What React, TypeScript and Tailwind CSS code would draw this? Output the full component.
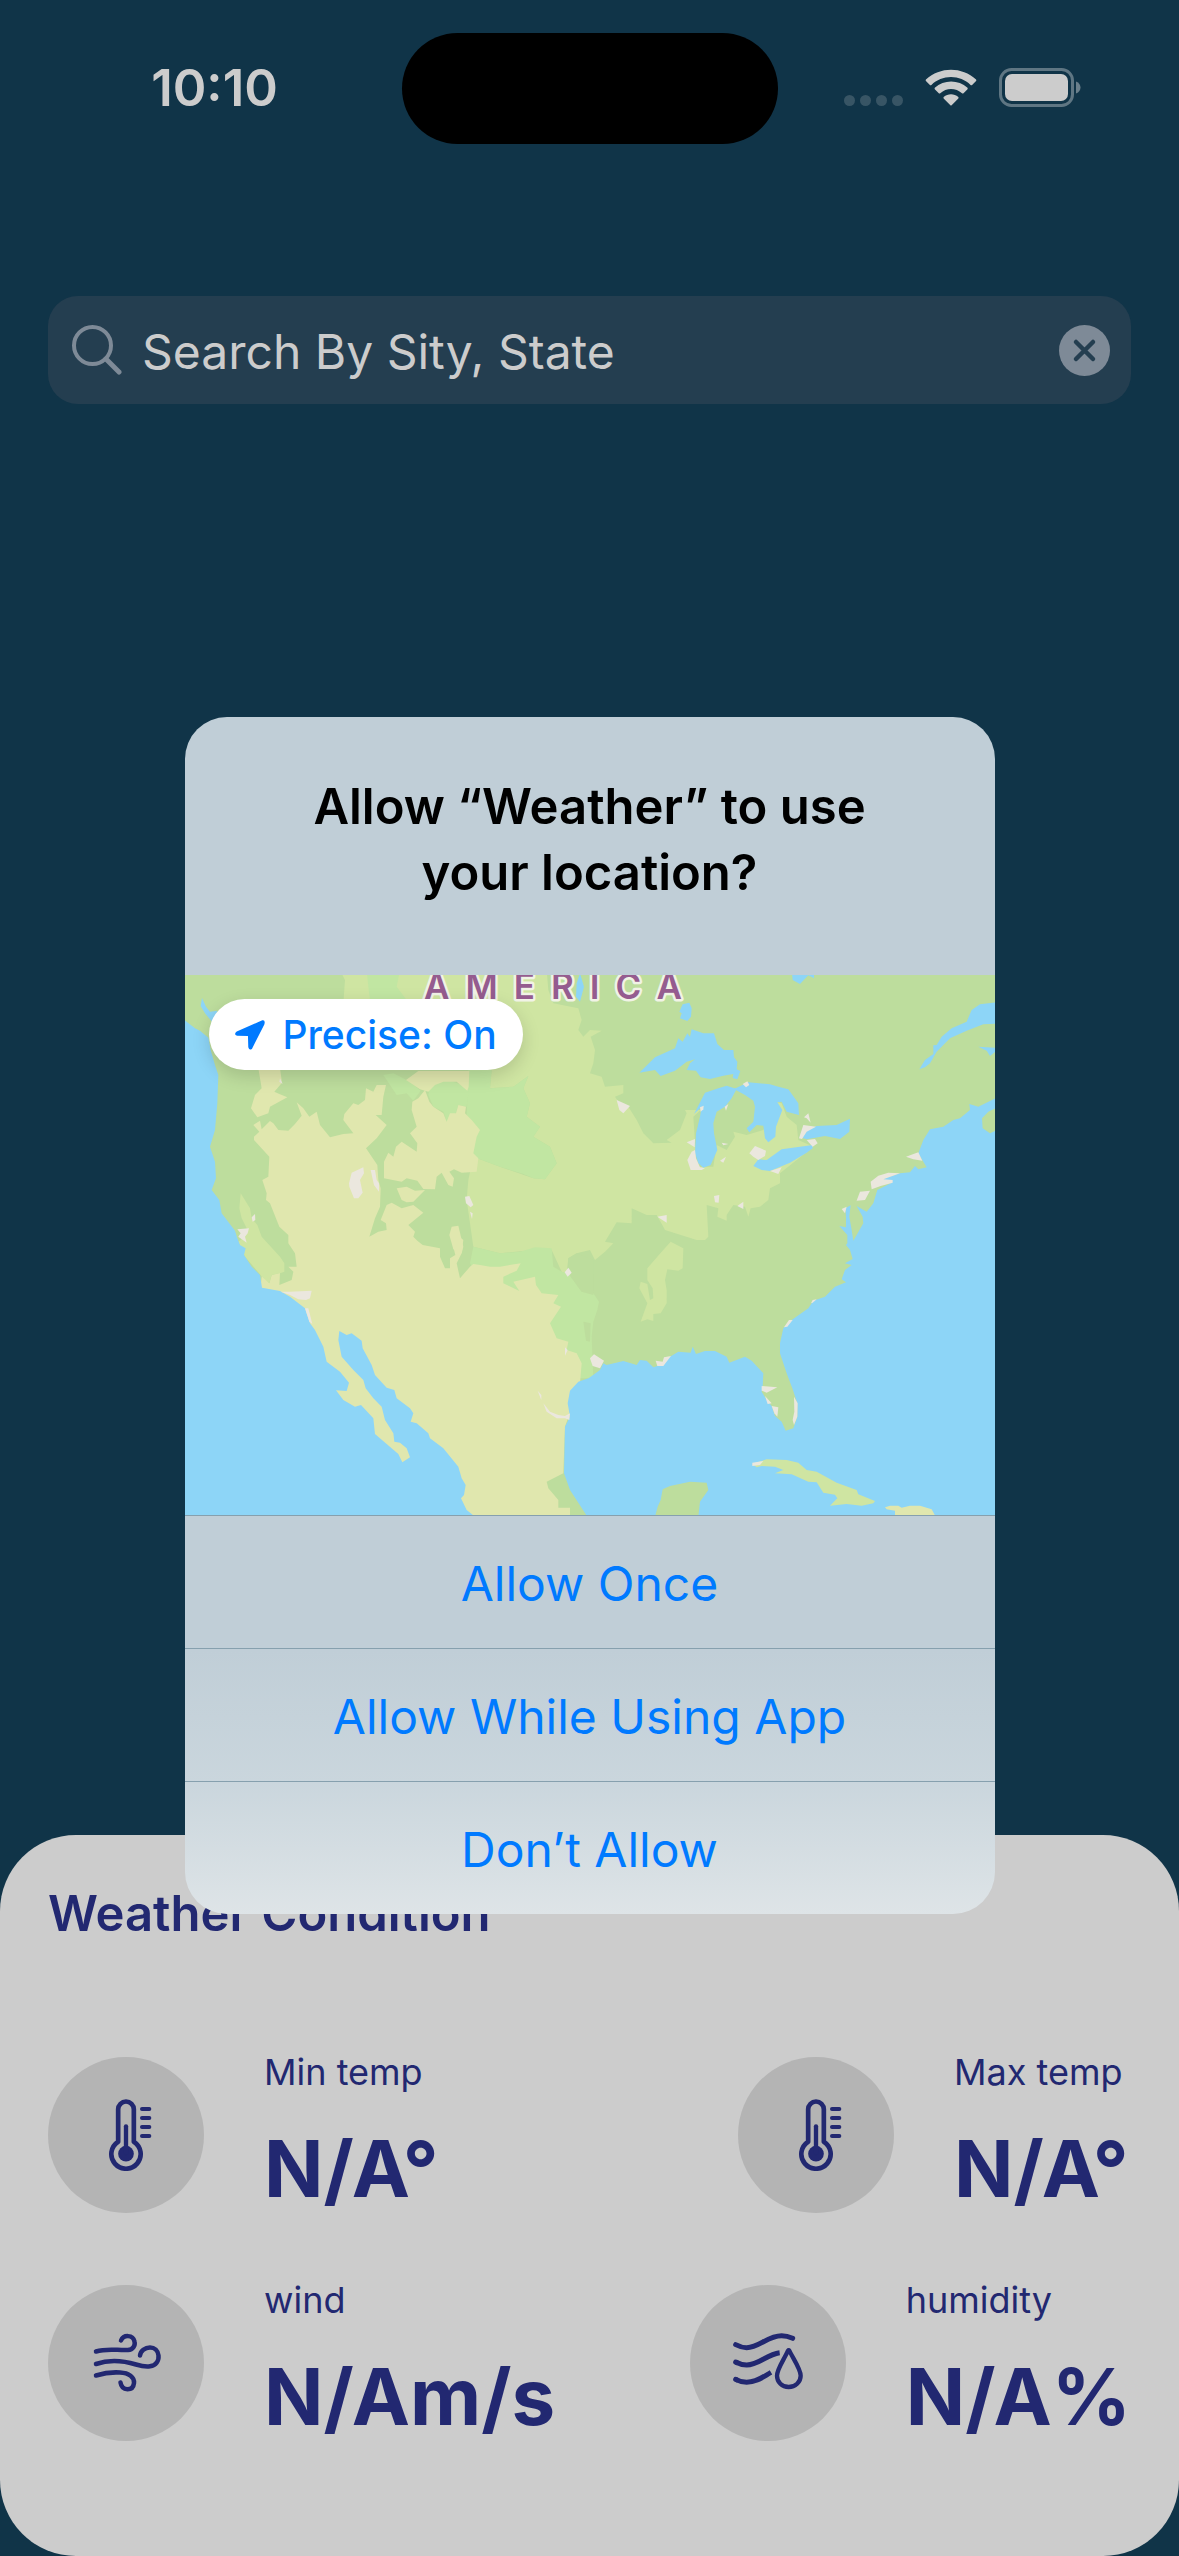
import React from "react";

/** Shifts a list of "x,y" points, so coast lines can be written tile by tile. */
function at(dx: number, dy: number, points: string): string {
  return points
    .trim()
    .split(/\s+/)
    .map((pair) => {
      const [x, y] = pair.split(",").map(Number);
      return `${x + dx},${y + dy}`;
    })
    .join(" ");
}

const PLAINS =
  "480,0 495,30 490,100 600,110 760,300 935,300 930,355 1000,350 1045,318 1030,355 1050,400 1040,440 1080,470 1060,500 1110,530 1130,580 1095,628 1060,625 960,590 880,560 865,630 860,690 870,760 880,830 960,850 1060,840 1115,840 1145,905 1160,910 1165,865 1190,850 1230,840 1245,870 1275,845 1300,820 1275,815 1310,757 1355,760 1355,715 1400,735 1430,735 1450,770 1455,780 1550,810 1575,810 1585,800 1580,705 1615,715 1612,740 1640,752 1640,735 1660,705 1695,710 1705,740 1712,715 1740,710 1765,690 1770,655 1800,640 1800,610 1900,530 1855,510 1850,465 1820,440 1805,400 1790,396 1790,420 1750,480 1700,495 1660,485 1665,500 1640,540 1610,525 1600,590 1550,590 1540,440 1562,420 1515,420 1520,430 1500,480 1460,510 1475,518 1420,520 1390,490 1370,450 1345,410 1315,395 1305,380 1330,370 1330,345 1275,350 1265,320 1230,310 1240,280 1245,240 1232,200 1265,182 1230,180 1210,200 1195,180 1205,150 1195,115 1120,100 1105,60 1100,0";

const MINT = [
  "560,0 660,0 650,50 680,90 570,90 565,50",
  "865,300 935,300 930,355 1000,350 1045,318 1030,355 1050,400 1040,440 1080,470 1060,500 1110,530 1130,580 1095,628 1060,625 1030,612 960,590 880,560 860,440",
  "610,315 640,310 690,335 722,362 700,392 680,370 650,375",
  "750,345 800,330 868,350 860,410 835,405 828,428 800,455 790,425 760,410 745,375",
  "880,830 960,850 1020,845 1065,832 1115,835 1120,890 1145,905 1165,910 1205,965 1240,970 1257,995 1252,1020 1240,1055 1235,1100 1240,1225 1190,1225 1000,1100 870,880",
];

const GREEN = [
  "1165,865 1190,850 1240,870 1240,975 1205,965 1165,910",
  "1210,1055 1232,1060 1230,1115 1218,1112",
  "1100,1535 1150,1512 1220,1640 1170,1640 1170,1613 1135,1613 1135,1590",
];

const DESERT = [
  "235,295 300,295 306,338 283,365 298,372 322,382 270,410 265,430 232,442 213,415 225,375 245,355",
  "220,465 240,452 245,478 270,453 280,460 295,480 325,482 345,462 365,437 350,397 370,415 388,440 410,425 420,465 450,502 490,492 520,490 490,450 493,432 520,400 535,405 555,390 558,355 580,365 590,345 618,345 610,380 605,435 587,435 620,465 590,505 558,535 592,585 595,630 602,655 600,710 585,745 568,800 595,785 620,780 618,760 602,750 608,735 620,705 635,698 665,715 700,705 730,728 685,765 705,785 700,800 712,812 728,825 780,835 780,860 795,895 810,895 810,865 826,855 815,810 825,790 850,810 845,850 830,880 840,925 870,890 880,882 900,885 930,890 960,890 1022,880 1010,902 970,920 970,940 1018,963 1000,935 1065,920 1068,945 1085,970 1135,975 1120,1000 1143,1010 1110,1060 1130,1105 1165,1115 1160,1140 1190,1150 1205,1180 1200,1240 1155,1370 1150,1510 1100,1535 1105,1555 1135,1590 1135,1613 1170,1613 1170,1640 840,1640 400,1480 240,960 246,915 268,940 275,915 300,908 298,945 335,930 340,905 325,890 350,890 345,850 325,820 325,795 298,770 270,700 258,690 260,670 247,630 265,620 268,560 222,510 222,500 238,485",
  "735,360 715,385 697,395 695,420 710,470 690,490 712,520 710,545 665,515 648,530 640,560 625,548 612,575 612,625 665,635 680,625 712,632 730,657 765,658 770,620 785,608 805,645 818,650 822,625 808,605 822,598 845,608 890,605 895,565 880,550 890,500 900,480 875,450 855,430 858,410 835,405 828,430 810,430 800,455 790,430 760,410 748,395",
  "678,330 715,303 868,303 866,350 862,362 830,335 790,335 765,345 745,365 720,358",
  "650,655 680,650 705,662 735,660 700,695 680,697 665,690",
  "815,770 835,767 850,830 845,850 820,838 808,795",
];

const CALIFORNIA =
  "182,670 210,715 215,745 232,765 245,800 300,860 313,880 313,905 300,910 275,915 268,940 246,920 195,860 175,815 195,800 200,775 185,745 178,715";

const DELTA =
  "242,5 280,25 278,85 265,92 232,88 225,120 230,150 230,190 212,220 190,222 190,243 172,238 152,245 172,190 148,145 152,125 172,132 180,180 190,175 188,145 172,120 172,85 215,35";

const PACIFIC = [
  "0,140 20,155 45,175 60,182 85,203 92,240 105,285 115,315 112,400 105,480 90,530 105,575 108,625 95,660 118,690 125,730 165,782 172,805 180,825 197,835 192,855 215,890 240,915 246,953 300,963 330,980 375,1015 390,1060 405,1080 430,1130 440,1175 480,1205 507,1238 500,1263 468,1261 490,1290 525,1310 543,1305 580,1345 585,1392 655,1452 667,1477 690,1462 680,1435 660,1418 643,1415 640,1390 615,1350 605,1310 580,1285 557,1255 550,1230 520,1200 485,1160 475,1110 478,1083 500,1095 515,1090 545,1112 548,1135 575,1185 585,1215 620,1253 643,1260 650,1285 690,1315 700,1330 692,1355 710,1360 745,1390 750,1405 790,1435 835,1490 845,1525 857,1545 852,1575 843,1585 860,1620 885,1640 0,1640",
  "66,84 78,110 90,125 112,122 100,160 75,130 62,108",
];

const ATLANTIC = [
  "1222,1640 1170,1560 1152,1510 1155,1370 1170,1340 1163,1300 1170,1262 1195,1235 1225,1225",
  at(1230, 810, "0,412 30,390 40,370 50,375 100,363 140,375 150,360 170,362 190,382 220,372 240,350 265,335 302,338 308,320 318,342 345,333 375,333 410,350 418,368 465,350 485,362 520,400 518,440 515,455 530,480 545,498 555,528 575,545 587,572 610,565 622,530 622,490 607,445 590,400 570,340 570,310 580,265 605,240 655,205 670,182 705,170 735,140 768,127 755,118 765,90 785,75 765,70 788,57 780,30 768,15"),
  at(1230, 0, "772,820 772,795 748,768 768,772 768,740 766,715 782,706 778,740 785,780 790,812 820,760 818,740 800,708 830,725 850,700 862,660 905,638 905,630 870,630 930,610 960,607 975,588 985,598 1010,592 1000,575 985,550 1000,510 1020,478 1060,470 1090,450 1110,445 1140,420 1138,402 1165,410 1222,382 1222,412 1195,425 1176,445 1178,475 1200,490 1222,480 1222,1640"),
].join(" ");

const LAKES = [
  "148,308 195,262 255,235 265,205 278,215 292,190 300,200 305,178 340,190 372,190 382,222 402,240 430,240 432,262 442,275 440,298 451,303 442,328 428,324 430,312 400,317 360,327 332,322 318,302 290,300 300,280 315,268 290,275 255,302 212,318 195,300",
  "312,432 345,368 385,355 410,347 440,357 425,385 405,410 380,425 370,460 372,490 382,540 362,585 340,593 325,580 315,550 318,490 330,440 335,410",
  "432,357 475,337 540,343 565,350 595,358 625,400 627,435 590,425 575,395 562,397 577,420 558,470 556,500 535,517 525,505 520,467 500,465 478,487 470,475 490,455 495,410 490,392 465,375",
  "490,588 505,568 530,570 575,538 668,525 668,535 650,548 600,578 540,603 515,600",
  "636,503 655,478 680,468 740,465 780,446 778,485 750,507 705,498 650,508",
  "278,103 298,98 305,115 303,140 292,153 270,145 275,130 268,125",
  "1222,97 1170,103 1145,120 1130,155 1085,175 1055,200 1040,225 1030,226 1030,252 1005,270 988,298 1005,292 1020,280 1040,245 1080,205 1130,182 1180,163 1222,161",
  "1165,230 1222,234 1222,240 1200,258 1190,242",
  "605,0 672,0 672,25 655,16 630,42 608,30",
  "-30,10 -18,50 -30,95 -42,80 -40,40",
];

const URBAN = [
  "507,640 515,608 550,592 552,610 540,630 548,668 535,685 522,685 508,650",
  "572,600 585,600 590,630 597,640 597,665 582,645",
  "855,680 868,678 880,705 872,712 858,700",
  "870,725 878,730 876,747",
  "172,778 207,775 203,790 195,800 200,818 175,800 182,790",
  "215,742 225,732 226,750 218,755",
  "302,965 330,965 395,962 390,985 378,990 355,988 330,975",
  "300,325 308,342 298,335",
  "375,1015 385,1015 397,1062 388,1055",
  "1165,893 1175,908 1163,920 1154,907",
  "1155,1132 1163,1140 1155,1157",
  "1090,1300 1110,1325 1135,1335 1155,1338 1170,1330 1168,1350 1155,1345 1130,1345 1100,1325",
  "1073,1262 1084,1275 1084,1290",
  at(1230, 0, "80,390 120,408 100,430 88,420"),
  at(1230, 0, "458,342 472,334 478,345 468,352"),
  at(1230, 0, "290,517 315,507 314,532"),
  at(1230, 0, "315,540 318,565 330,592 345,595 335,600 302,600 292,570 305,545"),
  at(1230, 0, "478,550 495,528 528,542 525,558 505,570 490,560"),
  at(1230, 0, "627,505 640,465 678,470 650,485 636,507"),
  at(1230, 0, "642,442 655,430 662,458 650,445"),
  at(1230, 0, "650,510 675,507 683,520 668,530"),
  at(1230, 0, "540,603 575,592 565,612"),
  at(1230, 0, "372,678 388,675 386,698 375,697"),
  at(1230, 0, "442,708 460,695 460,717"),
  at(1230, 0, "202,740 230,735 230,758"),
  at(1230, 0, "842,635 865,617 895,608 930,610 880,628 908,630 908,638 872,648 845,658"),
  at(1230, 0, "810,665 840,662 825,690 800,692 795,705"),
  at(1230, 0, "948,560 985,547 997,572 970,568"),
  at(1230, 0, "755,717 770,710 765,730"),
  at(1230, 0, "330,412 341,407 340,418 332,425"),
  at(1230, 0, "404,410 415,402 408,422"),
  at(1230, 0, "390,572 408,560 400,578"),
  at(1230, 0, "395,518 415,522 400,526"),
  at(1230, 810, "0,355 12,343 42,362 30,385 8,378"),
  at(1230, 810, "197,362 218,365 222,352 243,348 220,378 202,378"),
  at(1230, 810, "515,438 562,442 530,458 515,452"),
  at(1230, 810, "545,498 565,502 562,530 553,520"),
  at(1230, 810, "612,470 623,490 622,530 612,555 608,540 613,515"),
  at(1230, 810, "525,468 545,490 533,492"),
  at(1230, 810, "582,262 597,240 608,240 592,260"),
  at(1230, 810, "663,190 668,180 680,178 668,188"),
];

const CUBA = at(1230, 810, "487,672 530,658 590,660 625,668 650,690 680,695 740,728 800,750 805,763 855,783 850,790 815,797 770,792 720,797 742,775 735,764 700,758 680,727 655,725 605,703 555,700 580,690 555,680 515,678 500,682");
const HAVANA = at(1230, 810, "487,668 520,663 510,675 487,678");
const HISPANIOLA = at(1230, 810, "885,802 900,797 925,797 935,803 960,797 990,797 1025,808 1037,830 915,830 915,812 890,808");
const YUCATAN = at(1230, 810, "195,830 203,800 212,780 218,748 240,738 300,725 350,728 355,750 330,785 325,830");

function Shapes({ list, fill, dx = 0 }: { list: string[]; fill: string; dx?: number }) {
  return (
    <g fill={fill} transform={`translate(${dx} 0)`}>
      {list.map((points) => (
        <polygon key={points} points={points} />
      ))}
    </g>
  );
}

function MapDrawing() {
  return (
    <svg viewBox="0 0 810 540" className="block w-full" role="img" aria-label="Map of North America">
      <g transform="scale(0.33333) translate(-15 -15)">
        <rect width="2460" height="1650" fill="#bddd9d" />
        <polygon points={PLAINS} fill="#cfe5a2" />
        <Shapes list={MINT} fill="#c1e6a2" />
        <Shapes list={GREEN} fill="#bddd9d" />
        <Shapes list={DESERT} fill="#e0e7ae" />
        <polygon points={CALIFORNIA} fill="#cfe5a2" />
        <polygon points={at(1230, 810, DELTA)} fill="#cfe5a2" />
        <Shapes list={PACIFIC} fill="#8dd5f7" />
        <polygon points={ATLANTIC} fill="#8dd5f7" />
        <Shapes list={LAKES} fill="#8dd5f7" dx={1230} />
        <Shapes list={URBAN} fill="#ebe7de" />
        <polygon points={CUBA} fill="#cfe5a2" />
        <polygon points={HAVANA} fill="#ebe7de" />
        <polygon points={HISPANIOLA} fill="#e0e7ae" />
        <polygon points={YUCATAN} fill="#bddd9d" />
      </g>
      <text
        x="239"
        y="24"
        className="font-semibold tracking-[16px]"
        fontSize="35"
        fill="#955c8f"
        stroke="#f1f3e6"
        strokeWidth="5"
        strokeLinejoin="round"
        paintOrder="stroke"
      >
        AMERICA
      </text>
    </svg>
  );
}

function WifiIcon() {
  return (
    <svg viewBox="0 0 17 12" className="h-[37px] w-[52px]" fill="#cccccc" aria-hidden="true">
      <path d="M8.5 2.6c2.4 0 4.7.9 6.4 2.6.1.1.3.1.5 0l1.3-1.3c.1-.1.1-.3 0-.5C12.100-.9 4.900-.9.300 3.400c-.1.200-.1.400 0 .5l1.300 1.300c.1.100.3.100.5 0C3.800 3.500 6.100 2.600 8.500 2.600z" />
      <path d="M8.500 6.500c1.300 0 2.600.5 3.600 1.400.1.100.3.100.5 0l1.300-1.300c.1-.1.100-.3 0-.5-3-2.800-7.700-2.800-10.700 0-.1.200-.1.400 0 .5l1.300 1.300c.1.100.3.100.5 0 1-.9 2.200-1.400 3.500-1.400z" />
      <path d="M10.900 9.100c.1.100.1.300 0 .5l-2.200 2.200c-.1.100-.3.100-.4 0L6.100 9.600c-.1-.2-.1-.4 0-.5 1.400-1.200 3.400-1.200 4.800 0z" />
    </svg>
  );
}

function BatteryIcon() {
  return (
    <svg viewBox="0 0 82 40" className="h-[40px] w-[82px]" aria-hidden="true">
      <rect x="1.500" y="1.500" width="72" height="36" rx="11" fill="none" stroke="#5f7683" strokeWidth="3" />
      <rect x="6" y="6" width="63" height="27" rx="7" fill="#cccccc" />
      <path d="M77 13.500c3 1 4.500 3.500 4.500 6s-1.500 5-4.500 6z" fill="#6b808c" />
    </svg>
  );
}

function ThermometerIcon() {
  return (
    <svg viewBox="0 0 72 72" className="size-[72px]" fill="none" stroke="#222871" aria-hidden="true">
      <g transform="scale(0.33333) translate(-360 -810)" strokeLinecap="round">
        <path strokeWidth="14" strokeLinejoin="round" d="M444.500 938V841a23.500 23.500 0 0 1 47 0v97a44 44 0 1 1-47 0z" />
        <circle cx="468" cy="974" r="23.500" fill="#222871" stroke="none" />
        <path strokeWidth="13" d="M468 892v80" />
        <path strokeWidth="12" d="M516 840h22M516 867h22M516 894h22M516 921h22" />
      </g>
    </svg>
  );
}

function WindIcon() {
  return (
    <svg viewBox="0 0 72 72" className="size-[72px]" fill="none" stroke="#222871" strokeWidth="4.500" strokeLinecap="round" aria-hidden="true">
      <path d="M6 24.500C17 21 27 23.500 38 23C43 22.500 45.500 18.500 44.500 14.500C43 7.500 33.500 7.500 31 13.500" />
      <path d="M6 37C22 31.500 36 34.500 46 37.500C52 39.300 56 40 60 39.300C66 38.300 69 34 68.500 28.500C68 23.500 64.500 20.500 60 20.500C55 20.500 50.500 24 50 28.500" />
      <path d="M6 48.500C14 46 22 45 30 45.500C39 46 44.500 50 44 56C43.500 61 41 62.300 37.500 62.300C33 62 31 59 30.500 55.500" />
    </svg>
  );
}

function HumidityIcon() {
  return (
    <svg viewBox="0 0 72 72" className="size-[72px] overflow-visible" fill="none" stroke="#222871" aria-hidden="true">
      <g transform="scale(0.33333) translate(-231 -234)" strokeWidth="15">
        <path strokeLinecap="round" d="M242 287C253 293 263 296 275 296C312 296 338 260 380 260C392 260 402 263 413 268" />
        <path d="M242 339C253 345 263 348 275 348C312 348 335 316 374 311" />
        <path d="M242 391C253 397 263 400 275 400C305 400 325 383 348 370" />
        <path strokeLinecap="round" d="M242 339l4 2M242 391l4 2" />
        <path
          strokeWidth="13"
          strokeLinejoin="round"
          d="M399 305C388 330 366 360 366 380C366 399 381 414 401 414C421 414 437 399 437 380C437 360 415 330 403 305Q401 302 399 305Z"
        />
      </g>
    </svg>
  );
}

function Reading({ icon, label, value }: { icon: React.ReactNode; label: string; value: string }) {
  return (
    <div className="flex items-center gap-[60px]">
      <div className="flex size-[156px] shrink-0 items-center justify-center rounded-full bg-[#b4b4b4]">{icon}</div>
      <dl className="flex min-w-[177px] flex-col gap-6">
        <dt className="text-[36px] leading-[44px]">{label}</dt>
        <dd className="text-[78px] leading-[102px] font-bold">{value}</dd>
      </dl>
    </div>
  );
}

const CHOICES = ["Allow Once", "Allow While Using App", "Don’t Allow"];

export default function App() {
  return (
    <div className="relative flex min-h-screen flex-col bg-[#103448] font-['Inter',sans-serif]">
      <header className="grid h-[177px] grid-cols-3 items-start pt-[33px]">
        <time className="pt-[24px] pl-[36px] text-center text-[51px] leading-[62px] font-semibold text-[#cccccc]">10:10</time>
        <div className="h-[111px] w-[376px] justify-self-center rounded-full bg-black" />
        <div className="flex h-[111px] items-center justify-end gap-[22px] pr-[98px] pb-[2px]">
          <div className="flex gap-[5px] pt-[26px]">
            <span className="size-[11px] rounded-full bg-[#385565]" />
            <span className="size-[11px] rounded-full bg-[#385565]" />
            <span className="size-[11px] rounded-full bg-[#385565]" />
            <span className="size-[11px] rounded-full bg-[#385565]" />
          </div>
          <WifiIcon />
          <BatteryIcon />
        </div>
      </header>

      <form className="mx-12 mt-[119px] flex h-[108px] items-center rounded-[30px] bg-[#243e50] pr-[21px] pl-[24px]" onSubmit={(e) => e.preventDefault()}>
        <svg viewBox="0 0 50 50" className="size-[50px] shrink-0" fill="none" stroke="#7e8a97" strokeLinecap="round" aria-hidden="true">
          <circle cx="20.500" cy="20.500" r="18.500" strokeWidth="4" />
          <path strokeWidth="5" d="M34 34l13 13" />
        </svg>
        <input
          type="text"
          aria-label="Search"
          defaultValue="Search By Sity, State"
          className="ml-[20px] min-w-0 flex-1 bg-transparent pt-1 text-[48px] leading-[62px] text-[#cccccc] outline-none"
        />
        <button type="button" aria-label="Clear text" className="size-[51px] shrink-0">
          <svg viewBox="0 0 51 51" className="size-full" aria-hidden="true">
            <circle cx="25.500" cy="25.500" r="25.500" fill="#7e8a97" />
            <path d="M17 17l17 17M34 17L17 34" stroke="#243e50" strokeWidth="4.500" strokeLinecap="round" />
          </svg>
        </button>
      </form>

      <section className="mt-auto rounded-[76px] bg-[#cccccc] px-12 pt-12 pb-[108px] text-[#222871]">
        <h2 className="text-[49px] leading-[62px] font-semibold">Weather Condition</h2>
        <div className="mt-[105px] flex flex-col gap-[58px]">
          <div className="flex justify-between">
            <Reading icon={<ThermometerIcon />} label="Min temp" value="N/A°" />
            <Reading icon={<ThermometerIcon />} label="Max temp" value="N/A°" />
          </div>
          <div className="flex justify-between">
            <Reading icon={<WindIcon />} label="wind" value="N/Am/s" />
            <Reading icon={<HumidityIcon />} label="humidity" value="N/A%" />
          </div>
        </div>
      </section>

      <div className="absolute inset-0 flex items-center justify-center px-12 pt-[177px] pb-[102px]">
        <div
          role="alertdialog"
          aria-labelledby="permission-title"
          className="w-full max-w-[810px] overflow-hidden rounded-[42px] bg-linear-to-b from-[#c0ced7] from-78% via-[#cad6dd] via-89% to-[#dee4e7]"
        >
          <h1 id="permission-title" className="px-[96px] pt-[57px] pb-[69px] text-center text-[49px] leading-[66px] font-semibold text-black">
            Allow “Weather” to use your location?
          </h1>
          <div className="relative">
            <MapDrawing />
            <button
              type="button"
              className="absolute top-6 left-6 flex h-[71px] items-center gap-[18px] rounded-full bg-white px-[26px] text-[39px] leading-[48px] font-medium whitespace-nowrap text-[#007aff] shadow-[0_6px_18px_rgba(0,0,0,0.15)]"
            >
              <svg viewBox="165 150 88 88" className="size-[30px]" fill="#007aff" aria-hidden="true">
                <path d="M245 151L170 184Q160 193 171 196L203 197L204 230Q207 241 215 234L251 163Q255 149 245 151Z" />
              </svg>
              Precise: On
            </button>
          </div>
          {CHOICES.map((choice) => (
            <button key={choice} type="button" className="block h-[133px] w-full border-t border-[#86a0ae] pt-1 text-center text-[48px] leading-[62px] text-[#007aff]">
              {choice}
            </button>
          ))}
        </div>
      </div>
    </div>
  );
}
